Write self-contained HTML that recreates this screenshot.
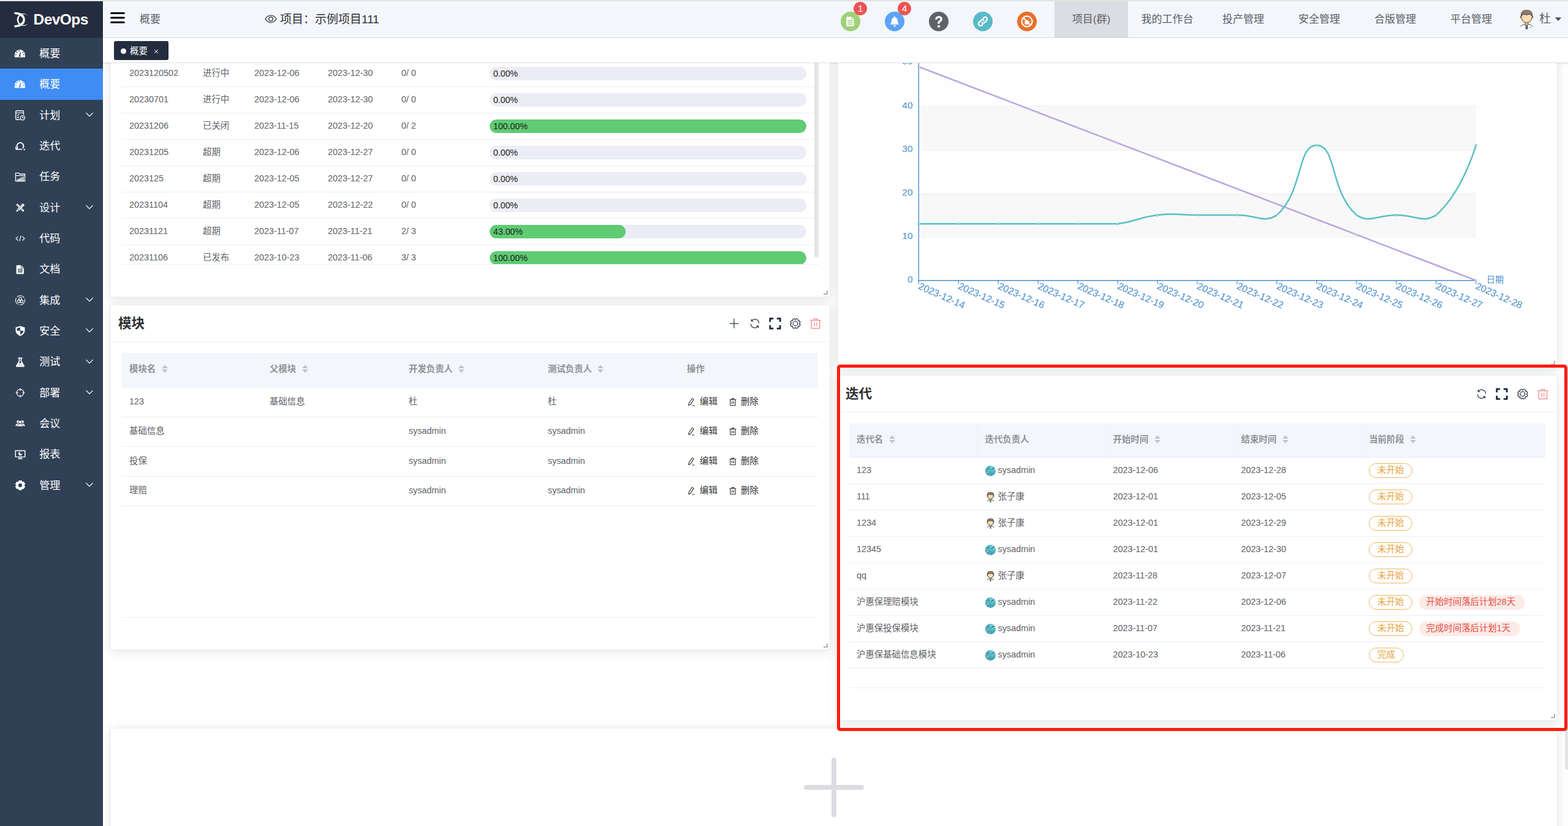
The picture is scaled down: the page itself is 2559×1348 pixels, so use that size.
<!DOCTYPE html>
<html lang="zh"><head>
<meta charset="utf-8">
<title>DevOps</title>
<style>
*{box-sizing:border-box;margin:0;padding:0}
html,body{width:2559px;height:1348px;overflow:hidden;background:#fff}
body{position:relative;font-family:"Liberation Sans","Noto Sans CJK SC",sans-serif;font-size:14px;color:#606266}
.abs{position:absolute}
svg{display:block;overflow:visible}
/* top strip */
#strip{left:0;top:0;width:2559px;height:2px;background:#e2e3df}
/* sidebar */
#side{left:0;top:2px;width:168px;height:1346px;background:#304156}
#logo{left:0;top:0;width:168px;height:60px;background:#242d3f}
#logo .txt{left:54.5px;top:14.4px;font-size:24.5px;font-weight:bold;color:#fff;line-height:32px;letter-spacing:-0.55px}
.mi{left:0;width:168px;height:50px;color:#fff;font-size:17px}
.mi .lbl{left:64.3px;top:.8px;line-height:50px;white-space:nowrap}
.mi .ic{left:22px;top:14px;width:22px;height:22px}
.mi .arr{left:140.3px;top:20.2px;width:12px;height:8px}
.mi.act{background:#3f8cf5}
/* header */
#hdr{left:168px;top:2px;width:2391px;height:60px;background:#f3f6fb;border-bottom:1px solid #d9dce3;border-left:1px solid #fff}
#tabs{left:168px;top:62px;width:2391px;height:41px;background:#fff;border-bottom:1px solid #d8dce5;box-shadow:0 1px 3px rgba(0,0,0,.10)}
.nav{top:0;height:59px;line-height:59px;font-size:17px;color:#5a5e66;text-align:center;white-space:nowrap}
/* cards */
.card{background:#fff;border:1px solid #ebeef5;border-radius:3px;box-shadow:0 2px 18px 0 rgba(0,0,0,.11)}
.ctitle{font-size:21.6px;font-weight:bold;color:#303133;white-space:nowrap;line-height:30px}
.hline{height:1px;background:#ebeef5}
.th{background:#f3f6fb}
.tht{font-weight:bold;color:#909399;font-size:14.4px;line-height:20px;white-space:nowrap}
.td{font-size:14.4px;line-height:20px;color:#606266;white-space:nowrap}
.rb{height:1px;background:#ebeef5}
.bar{height:22px;border-radius:11px;background:#ecedf4;overflow:hidden}
.bar i{display:block;height:22px;border-radius:11px;background:#5fcb73}
.bart{font-size:14.2px;line-height:22px;color:#1b1b1b;white-space:nowrap}
.tag{height:24px;line-height:20px;border:1px solid #f1b55c;border-radius:12px;color:#e6a23c;font-size:14.4px;padding:0 12.8px;white-space:nowrap;background:#fff}
.rtag{height:24px;line-height:22px;border-radius:12px;color:#e34d3f;font-size:14.4px;padding:0 15.6px 0 12px;white-space:nowrap;background:#fdebe8}
.k{display:inline-block;height:0}
</style>
</head>
<body>
<div id="strip" class="abs"></div><div class="abs" style="left:0;top:1px;width:168px;height:1px;background:#eef0ed"></div>

<!-- SIDEBAR -->
<div id="side" class="abs">
  <div id="logo" class="abs">
    <svg class="abs" style="left:23.21px;top:17.30px" width="23.52" height="26.26" viewBox="150 170 430 480"><path d="M160 182C230 182 290 195 340 215C430 250 475 330 475 410C475 490 430 570 340 605C290 625 230 638 160 638L160 578C220 575 262 568 300 545C375 510 415 460 415 410C415 360 375 310 300 275C262 252 220 245 160 242Z" fill="#fff"></path><path d="M570 300A185 185 0 1 0 570 520A166 166 0 1 1 570 300Z" fill="#fff"></path></svg>
    <div class="txt abs">DevOps</div>
  </div>
  <!--MENU_S-->
  <div class="mi abs" style="top:60.00px;height:50.36px"><div class="ic abs"><svg viewBox="0 0 22 22" width="22" height="22"><path d="M1.800 13.600A8.600 8.600 0 0 1 19 13.600V16.400A1.200 1.200 0 0 1 17.800 17.600H3A1.200 1.200 0 0 1 1.800 16.400Z" fill="#fff"></path><g fill="#304156"><circle cx="3.900" cy="13.300" r="1"></circle><circle cx="5.300" cy="9.300" r="1"></circle><circle cx="9.300" cy="7" r="1"></circle><circle cx="15.300" cy="9.300" r="1"></circle><circle cx="16.900" cy="13.300" r="1"></circle><path d="M9 15.400l1.900-6.400 1.100.3-.9 6.600z"></path><circle cx="10.100" cy="15.500" r="1.250"></circle></g></svg></div><div class="lbl abs">概要</div></div>
  <div class="mi abs act" style="top:110.36px;height:50.36px"><div class="ic abs"><svg viewBox="0 0 22 22" width="22" height="22"><path d="M1.800 13.600A8.600 8.600 0 0 1 19 13.600V16.400A1.200 1.200 0 0 1 17.800 17.600H3A1.200 1.200 0 0 1 1.800 16.400Z" fill="#fff"></path><g fill="#3f8cf5"><circle cx="3.900" cy="13.300" r="1"></circle><circle cx="5.300" cy="9.300" r="1"></circle><circle cx="9.300" cy="7" r="1"></circle><circle cx="15.300" cy="9.300" r="1"></circle><circle cx="16.900" cy="13.300" r="1"></circle><path d="M9 15.400l1.900-6.400 1.100.3-.9 6.600z"></path><circle cx="10.100" cy="15.500" r="1.250"></circle></g></svg></div><div class="lbl abs">概要</div></div>
  <div class="mi abs" style="top:160.72px;height:50.36px"><div class="ic abs"><svg viewBox="0 0 22 22" width="20" height="20" style="margin:1.1px 0 0 .7px" fill="none" stroke="#fff" stroke-width="1.5"><path d="M11 19H4.5A1.5 1.5 0 0 1 3 17.500v-13A1.500 1.500 0 0 1 4.500 3h11A1.500 1.500 0 0 1 17 4.500V10"></path><path d="M3 6.800h14" stroke-width="1.3"></path><path d="M5.500 10.300l1.200 1.200 2.200-2.300M5.500 14.600l1.200 1.200 2.200-2.300" stroke-width="1.3"></path><circle cx="15.300" cy="15.600" r="3.900"></circle><path d="M15.300 13.600v2.200h1.800" stroke-width="1.3"></path></svg></div><div class="lbl abs">计划</div><svg class="arr abs" viewBox="0 0 12 8" width="12" height="8"><path d="M.400 1.100L6 6.700l5.600-5.600" fill="none" stroke="#fff" stroke-width="1.300"></path></svg></div>
  <div class="mi abs" style="top:211.08px;height:50.36px"><div class="ic abs"><svg viewBox="0 0 22 22" width="20" height="20" style="margin:1.1px 0 0 .7px" fill="none" stroke="#fff" stroke-width="2"><path d="M6.300 15.200A6 6 0 1 1 16.800 12.800c-.3 1-.8 1.900-1.500 2.600"></path><path d="M2.800 17.300h11.400" stroke-width="1.800"></path><path d="M2.500 12.400l1 3.700 3.600-1.100" stroke-width="1.500"></path><circle cx="18.400" cy="17.600" r="1.300" fill="#fff" stroke="none"></circle></svg></div><div class="lbl abs">迭代</div></div>
  <div class="mi abs" style="top:261.44px;height:50.36px"><div class="ic abs"><svg viewBox="0 0 22 22" width="20" height="20" style="margin:1.1px 0 0 .7px" fill="none" stroke="#fff" stroke-width="1.400"><path d="M2.700 18.300V3.700h5.600l1.400 1.800h9.600v12.800z"></path><path d="M2.700 8.300h16.600"></path><g fill="#fff" stroke="none"><rect x="5" y="15" width="1.800" height="2.600"></rect><rect x="7.600" y="13.800" width="1.800" height="3.800"></rect><rect x="10.200" y="12.700" width="1.800" height="4.900"></rect><rect x="12.800" y="11.500" width="1.800" height="6.100"></rect><rect x="15.400" y="10.400" width="1.800" height="7.200"></rect></g></svg></div><div class="lbl abs">任务</div></div>
  <div class="mi abs" style="top:311.80px;height:50.36px"><div class="ic abs"><svg viewBox="0 0 22 22" width="20" height="20" style="margin:1.1px 0 0 .7px" fill="#fff"><path d="M3.600 5.800l2.300-2.300 12.600 12.600-2.300 2.300z"></path><path d="M15.600 3.200l3.200 3.200-9.700 9.700-3.200-3.200z"></path><path d="M5.200 13.700l3.100 3.100-4.600 1.500z"></path><g stroke="#304156" stroke-width="1" fill="none"><path d="M6.300 7.600l1.300-1.300M8.300 9.600l1.300-1.300M12.300 13.600l1.300-1.300M14.300 15.600l1.300-1.300"></path><path d="M7 14.200l7.900-7.900"></path></g></svg></div><div class="lbl abs">设计</div><svg class="arr abs" viewBox="0 0 12 8" width="12" height="8"><path d="M.400 1.100L6 6.700l5.600-5.600" fill="none" stroke="#fff" stroke-width="1.300"></path></svg></div>
  <div class="mi abs" style="top:362.16px;height:50.36px"><div class="ic abs"><svg viewBox="0 0 22 22" width="20" height="20" style="margin:1.1px 0 0 .7px" fill="none" stroke="#fff" stroke-width="1.300" stroke-linecap="round" stroke-linejoin="round"><path d="M6.800 7.800L3.300 11.200l3.500 3.400M15.200 7.800l3.500 3.400-3.500 3.400M12.400 6.900L9.600 15.500"></path></svg></div><div class="lbl abs">代码</div></div>
  <div class="mi abs" style="top:412.52px;height:50.36px"><div class="ic abs"><svg viewBox="0 0 22 22" width="20" height="20" style="margin:1.1px 0 0 .7px"><path d="M5.500 3h7.200l4.800 4.800v9.700a1.500 1.500 0 0 1-1.500 1.500H5.500A1.500 1.500 0 0 1 4 17.500v-13A1.500 1.500 0 0 1 5.500 3z" fill="#fff"></path><path d="M12.700 3v4.800h4.800" fill="none" stroke="#304156" stroke-width="1"></path><path d="M6.700 10.300h8.600M6.700 12.800h8.600M6.700 15.300h8.600" stroke="#304156" stroke-width="1.200"></path></svg></div><div class="lbl abs">文档</div></div>
  <div class="mi abs" style="top:462.88px;height:50.36px"><div class="ic abs"><svg viewBox="0 0 22 22" width="20" height="20" style="margin:1.1px 0 0 .7px" fill="none" stroke="#fff" stroke-width="1.200"><circle cx="11" cy="11" r="8.300" stroke-dasharray="14 2.500"></circle><circle cx="11" cy="8.300" r="2.500"></circle><circle cx="8.500" cy="12.800" r="2.500"></circle><circle cx="13.500" cy="12.800" r="2.500"></circle><circle cx="11" cy="11.300" r="1" fill="#fff" stroke="none"></circle></svg></div><div class="lbl abs">集成</div><svg class="arr abs" viewBox="0 0 12 8" width="12" height="8"><path d="M.400 1.100L6 6.700l5.600-5.600" fill="none" stroke="#fff" stroke-width="1.300"></path></svg></div>
  <div class="mi abs" style="top:513.24px;height:50.36px"><div class="ic abs"><svg viewBox="0 0 22 22" width="20" height="20" style="margin:1.1px 0 0 .7px"><path d="M11 2.300l8.200 2.300v5.600c0 4.800-3.400 8.200-8.200 9.900-4.800-1.700-8.200-5.100-8.200-9.900V4.600z" fill="#fff"></path><path d="M11 4.600v6.200H5.100V6.300z" fill="#304156"></path><path d="M11 10.800h5.900c-.3 3.100-2.600 5.500-5.900 6.900z" fill="#304156"></path></svg></div><div class="lbl abs">安全</div><svg class="arr abs" viewBox="0 0 12 8" width="12" height="8"><path d="M.400 1.100L6 6.700l5.600-5.600" fill="none" stroke="#fff" stroke-width="1.300"></path></svg></div>
  <div class="mi abs" style="top:563.60px;height:50.36px"><div class="ic abs"><svg viewBox="0 0 22 22" width="20" height="20" style="margin:1.1px 0 0 .7px"><path d="M7.300 2.800h7.400v1.800h-1.100v4.600l5 8.300a1.300 1.300 0 0 1-1.100 2H4.500a1.300 1.300 0 0 1-1.100-2l5-8.300V4.600H7.300z" fill="#fff"></path><path d="M10.200 4.600h1.600v5.100l1.700 2.900H8.500l1.700-2.900z" fill="#304156"></path><circle cx="9.300" cy="15.500" r=".9" fill="#304156"></circle><circle cx="12.600" cy="16.600" r=".7" fill="#304156"></circle></svg></div><div class="lbl abs">测试</div><svg class="arr abs" viewBox="0 0 12 8" width="12" height="8"><path d="M.400 1.100L6 6.700l5.600-5.600" fill="none" stroke="#fff" stroke-width="1.300"></path></svg></div>
  <div class="mi abs" style="top:613.96px;height:50.36px"><div class="ic abs"><svg viewBox="0 0 22 22" width="20" height="20" style="margin:1.1px 0 0 .7px" fill="none" stroke="#fff" stroke-width="1.300"><circle cx="11" cy="11" r="6.300"></circle><path d="M11 2.800v5M11 14.200v5M2.800 11h5M14.200 11h5"></path></svg></div><div class="lbl abs">部署</div><svg class="arr abs" viewBox="0 0 12 8" width="12" height="8"><path d="M.400 1.100L6 6.700l5.600-5.600" fill="none" stroke="#fff" stroke-width="1.300"></path></svg></div>
  <div class="mi abs" style="top:664.32px;height:50.36px"><div class="ic abs"><svg viewBox="0 0 22 22" width="20" height="20" style="margin:1.1px 0 0 .7px" fill="#fff"><circle cx="7.200" cy="8" r="2.500"></circle><circle cx="14.800" cy="8" r="2.500"></circle><path d="M2.500 15.600c.3-2.700 2-4.300 4.700-4.300 1 0 1.800.2 2.500.7-.9.900-1.400 2.100-1.500 3.600z"></path><path d="M19.500 15.600c-.3-2.700-2-4.300-4.700-4.300-1 0-1.800.2-2.500.7.900.9 1.400 2.100 1.500 3.600z"></path><circle cx="11" cy="8.600" r="2.900" stroke="#304156" stroke-width="1"></circle><path d="M5.600 16.600c.3-3.100 2.300-4.900 5.400-4.900s5.100 1.800 5.400 4.900z" stroke="#304156" stroke-width="1"></path></svg></div><div class="lbl abs">会议</div></div>
  <div class="mi abs" style="top:714.68px;height:50.36px"><div class="ic abs"><svg viewBox="0 0 22 22" width="20" height="20" style="margin:1.1px 0 0 .7px"><path d="M2.500 3.800h17v11.200h-17z" fill="none" stroke="#fff" stroke-width="1.600"></path><path d="M7 18.300h8M9.300 15v3.300M12.700 15v3.300" stroke="#fff" stroke-width="1.500"></path><circle cx="11" cy="9.400" r="3.300" fill="#fff"></circle><path d="M11 9.400V6.100a3.300 3.300 0 0 1 3.300 3.300z" fill="#304156" stroke="#304156" stroke-width=".6"></path></svg></div><div class="lbl abs">报表</div></div>
  <div class="mi abs" style="top:765.04px;height:50.36px"><div class="ic abs"><svg viewBox="0 0 22 22" width="20" height="20" style="margin:1.1px 0 0 .7px"><path d="M9.10 3.230 L12.900 3.230 L13.450 5.520 L14.520 6.140 L16.780 5.470 L18.680 8.760 L16.970 10.380 L16.970 11.620 L18.680 13.240 L16.780 16.530 L14.520 15.860 L13.450 16.480 L12.900 18.770 L9.100 18.770 L8.550 16.480 L7.480 15.860 L5.220 16.530 L3.320 13.240 L5.030 11.620 L5.030 10.380 L3.320 8.760 L5.220 5.470 L7.480 6.140 L8.550 5.520z" fill="#fff" stroke="#fff" stroke-width="2.200" stroke-linejoin="round"></path><circle cx="11" cy="11" r="3.400" fill="#304156"></circle></svg></div><div class="lbl abs">管理</div><svg class="arr abs" viewBox="0 0 12 8" width="12" height="8"><path d="M.400 1.100L6 6.700l5.600-5.600" fill="none" stroke="#fff" stroke-width="1.300"></path></svg></div>
  <!--MENU_E-->
</div>

<!-- HEADER -->
<div id="hdr" class="abs">
  <!--HDR_S-->
  <svg class="abs" style="left:10px;top:16px" width="26" height="22" viewBox="0 0 26 22"><path d="M2.500 3.500h20.800M2.500 11h20.800M2.500 18.500h20.800" stroke="#000" stroke-width="3" stroke-linecap="round" fill="none"></path></svg>
  <div class="abs" style="left:59px;top:18px;font-size:17px;line-height:24px;color:#5f6368;white-space:nowrap">概要</div>
  <svg class="abs" style="left:263px;top:22px" width="20" height="14" viewBox="0 0 20 14"><path d="M1 7C3.200 3.200 6.300 1.200 10 1.200S16.800 3.200 19 7c-2.200 3.800-5.300 5.800-9 5.800S3.200 10.800 1 7z" fill="none" stroke="#303133" stroke-width="1.300"></path><circle cx="10" cy="7" r="3.300" fill="none" stroke="#303133" stroke-width="1.300"></circle></svg>
  <div class="abs" style="left:288px;top:17px;font-size:19px;line-height:26px;color:#303133;white-space:nowrap">项目：示例项目111</div>
  <svg class="abs" style="left:1202.6px;top:16.8px" width="32" height="32" viewBox="0 0 32 32"><circle cx="16" cy="16" r="16" fill="#a0d07a"></circle><path d="M10.200 8.500h8l3.300 3.300v11a.9.9 0 0 1-.9.900H10.200a.9.9 0 0 1-.9-.9V9.400a.9.9 0 0 1 .9-.9z" fill="#fff"></path><path d="M18.200 8.500v3.300h3.300" fill="none" stroke="#a0d07a" stroke-width=".9"></path><path d="M11.300 14.200h8.400M11.300 17.200h8.400M11.300 20.200h8.400" stroke="#a0d07a" stroke-width="1.500"></path></svg>
  <svg class="abs" style="left:1274.5px;top:16.8px" width="32" height="32" viewBox="0 0 32 32"><circle cx="16" cy="16" r="16" fill="#5aa3f8"></circle><path d="M16 7.600c.7 0 1.100.5 1.100 1.100v.5c2.500.6 3.900 2.700 3.900 5.400 0 2.800.7 4.400 2.100 5.500v.9H8.900v-.9c1.400-1.100 2.100-2.700 2.100-5.500 0-2.700 1.400-4.800 3.900-5.400v-.5c0-.6.4-1.100 1.100-1.100z" fill="#fff"></path><path d="M13.800 22.300h4.400a2.200 2.200 0 0 1-4.400 0z" fill="#fff"></path></svg>
  <svg class="abs" style="left:1346.5px;top:16.8px" width="32" height="32" viewBox="0 0 32 32"><circle cx="16" cy="16" r="16" fill="#606267"></circle><g transform="translate(16 16.300) scale(1.220) translate(-16 -16)"><path d="M11.300 13.200c0-2.900 2-4.700 4.800-4.700s4.700 1.700 4.700 4.100c0 1.700-.9 2.700-2.100 3.500-1 .7-1.400 1.200-1.400 2.200v.6h-2.700v-.9c0-1.600.7-2.500 1.900-3.300 1-.7 1.500-1.200 1.500-2 0-1-.7-1.700-1.900-1.700s-2.100.8-2.100 2.200z" fill="#fff"></path><circle cx="16" cy="22.400" r="1.800" fill="#fff"></circle></g></svg>
  <svg class="abs" style="left:1418.5px;top:16.8px" width="32" height="32" viewBox="0 0 32 32"><circle cx="16" cy="16" r="16" fill="#5bbac8"></circle><g fill="none" stroke="#fff" stroke-width="2.300" stroke-linecap="round"><path d="M14.300 17.700a3.300 3.300 0 0 0 4.700 0l3.100-3.100a3.300 3.300 0 0 0-4.700-4.700l-1 1"></path><path d="M17.700 14.300a3.300 3.300 0 0 0-4.700 0l-3.100 3.100a3.300 3.300 0 0 0 4.700 4.700l1-1"></path></g></svg>
  <svg class="abs" style="left:1490.7px;top:16.8px" width="32" height="32" viewBox="0 0 32 32"><circle cx="16" cy="16" r="16" fill="#e8702a"></circle><circle cx="16" cy="16" r="8.600" fill="none" stroke="#fff" stroke-width="2.200"></circle><path d="M9.900 9.900l12.200 12.200" stroke="#fff" stroke-width="2.200"></path><path d="M12.500 18.500c0-2.800 1.500-4.600 3.500-4.600s3.500 1.800 3.500 4.600c0 1.200-.4 2-1 2.600h-5c-.6-.6-1-1.400-1-2.600z" fill="#fff"></path><path d="M14.300 13.500l-1-1.400M17.700 13.500l1-1.400M12.300 16.500l-1.900-.6M19.700 16.500l1.900-.6M12.500 19.500l-1.800.8M19.500 19.500l1.800.8" stroke="#fff" stroke-width="1"></path></svg>
  <div class="abs" style="left:1224.2px;top:0.5px;width:22px;height:22px;border-radius:11px;background:#ea5455;color:#fff;font-size:15px;line-height:22px;text-align:center">1</div>
  <div class="abs" style="left:1296.1px;top:0.5px;width:22px;height:22px;border-radius:11px;background:#ea5455;color:#fff;font-size:15px;line-height:22px;text-align:center">4</div>
  <div class="abs" style="left:1552px;top:0;width:120px;height:59px;background:#dcdde3"></div>
  <div class="nav abs" style="left:1550px;width:124px">项目(群)</div>
  <div class="nav abs" style="left:1674px;width:124px">我的工作台</div>
  <div class="nav abs" style="left:1798px;width:124px">投产管理</div>
  <div class="nav abs" style="left:1922px;width:124px">安全管理</div>
  <div class="nav abs" style="left:2046px;width:124px">合版管理</div>
  <div class="nav abs" style="left:2170px;width:124px">平台管理</div>
  <div class="abs" style="left:2343px;top:16px;font-size:19px;line-height:26px;color:#5a5e66">杜</div>
  <svg class="abs" style="left:2368px;top:26px" width="12" height="7" viewBox="0 0 12 7"><path d="M.8.500h10.400L6 6.300z" fill="#4a4e57"></path></svg>
  <svg class="abs" style="left:2306.5px;top:13.3px" width="32" height="34" viewBox="0 0 32 34"><defs><clipPath id="uav"><circle cx="15.600" cy="17" r="15.700"></circle></clipPath></defs><g clip-path="url(#uav)">
<circle cx="15.600" cy="17" r="15.700" fill="#f6f6f4"></circle>
<path d="M3.300 34C3.800 27.600 8 25.700 12.200 24.800L15.600 27 19 24.800C23.200 25.700 27.400 27.600 27.900 34Z" fill="#fff" stroke="#3a3a3a" stroke-width=".9"></path>
<path d="M13.900 25.200h3.400l.6 8.200h-4.600z" fill="#4d6784"></path>
<path d="M20.500 29.600h2.300" stroke="#3a3a3a" stroke-width="1"></path>
<path d="M13.300 20.500h4.600v4.600l-2.300 1.500-2.300-1.500z" fill="#f3d09c" stroke="#3a3a3a" stroke-width=".7"></path>
<circle cx="6.400" cy="12.800" r="1.400" fill="#fbdcaa" stroke="#3a3a3a" stroke-width=".8"></circle><circle cx="24.800" cy="12.800" r="1.400" fill="#fbdcaa" stroke="#3a3a3a" stroke-width=".8"></circle>
<ellipse cx="15.600" cy="11.600" rx="9" ry="10.800" fill="#fbdcaa" stroke="#3a3a3a" stroke-width="1"></ellipse>
<path d="M6.600 11.600C6 4.600 10 .8 15.600 .8C21.200 .8 25.200 4.600 24.600 11.600C23.500 9.400 21 8.200 18 8.500C17 9.600 14.400 9.600 13.200 8.500C10.400 8.200 7.800 9.400 6.600 11.600Z" fill="#8c7b6e" stroke="#3a3a3a" stroke-width=".9"></path>
</g></svg>
  <!--HDR_E-->
</div>
<div id="tabs" class="abs">
  <!--TABS_S-->
  <div class="abs" style="left:18px;top:5px;width:89px;height:31px;background:#242d3f;border-radius:3px"></div>
  <div class="abs" style="left:28.8px;top:16.6px;width:9px;height:9px;border-radius:5px;background:#fff"></div>
  <div class="abs" style="left:44px;top:11px;font-size:14.4px;line-height:20px;color:#fff;white-space:nowrap">概要</div>
  <svg class="abs" style="left:83.2px;top:17.8px" width="8" height="8" viewBox="0 0 8 8"><path d="M1 1l6 6M7 1L1 7" stroke="#fff" stroke-width="1" fill="none"></path></svg>
  <!--TABS_E-->
</div>

<!-- CONTENT -->
<div id="content" class="abs" style="left:168px;top:103px;width:2391px;height:1245px;overflow:hidden">
  <!--CARD1_S-->
  <div class="card abs" style="left:12px;top:-63px;width:1175px;height:445px"></div>
  <div class="abs" style="left:31px;top:0px;width:1138px;height:329px;overflow:hidden">
  <div class="td abs" style="left:12px;top:6.4px">2023120502</div>
  <div class="td abs" style="left:132px;top:6.4px">进行中</div>
  <div class="td abs" style="left:216px;top:6.4px">2023-12-06</div>
  <div class="td abs" style="left:336px;top:6.4px">2023-12-30</div>
  <div class="td abs" style="left:456px;top:6.4px">0/ 0</div>
  <div class="bar abs" style="left:600px;top:6.2px;width:517px"></div>
  <div class="bart abs" style="left:606px;top:5.6px">0.00%</div>
  <div class="rb abs" style="left:0;top:38.0px;width:1130px"></div>
  <div class="td abs" style="left:12px;top:49.4px">20230701</div>
  <div class="td abs" style="left:132px;top:49.4px">进行中</div>
  <div class="td abs" style="left:216px;top:49.4px">2023-12-06</div>
  <div class="td abs" style="left:336px;top:49.4px">2023-12-30</div>
  <div class="td abs" style="left:456px;top:49.4px">0/ 0</div>
  <div class="bar abs" style="left:600px;top:49.2px;width:517px"></div>
  <div class="bart abs" style="left:606px;top:48.6px">0.00%</div>
  <div class="rb abs" style="left:0;top:81.0px;width:1130px"></div>
  <div class="td abs" style="left:12px;top:92.4px">20231206</div>
  <div class="td abs" style="left:132px;top:92.4px">已关闭</div>
  <div class="td abs" style="left:216px;top:92.4px">2023-11-15</div>
  <div class="td abs" style="left:336px;top:92.4px">2023-12-20</div>
  <div class="td abs" style="left:456px;top:92.4px">0/ 2</div>
  <div class="bar abs" style="left:600px;top:92.2px;width:517px"><i style="width:100.0%"></i></div>
  <div class="bart abs" style="left:606px;top:91.6px">100.00%</div>
  <div class="rb abs" style="left:0;top:124.0px;width:1130px"></div>
  <div class="td abs" style="left:12px;top:135.4px">20231205</div>
  <div class="td abs" style="left:132px;top:135.4px">超期</div>
  <div class="td abs" style="left:216px;top:135.4px">2023-12-06</div>
  <div class="td abs" style="left:336px;top:135.4px">2023-12-27</div>
  <div class="td abs" style="left:456px;top:135.4px">0/ 0</div>
  <div class="bar abs" style="left:600px;top:135.2px;width:517px"></div>
  <div class="bart abs" style="left:606px;top:134.6px">0.00%</div>
  <div class="rb abs" style="left:0;top:167.0px;width:1130px"></div>
  <div class="td abs" style="left:12px;top:178.4px">2023125</div>
  <div class="td abs" style="left:132px;top:178.4px">超期</div>
  <div class="td abs" style="left:216px;top:178.4px">2023-12-05</div>
  <div class="td abs" style="left:336px;top:178.4px">2023-12-27</div>
  <div class="td abs" style="left:456px;top:178.4px">0/ 0</div>
  <div class="bar abs" style="left:600px;top:178.2px;width:517px"></div>
  <div class="bart abs" style="left:606px;top:177.6px">0.00%</div>
  <div class="rb abs" style="left:0;top:210.0px;width:1130px"></div>
  <div class="td abs" style="left:12px;top:221.4px">20231104</div>
  <div class="td abs" style="left:132px;top:221.4px">超期</div>
  <div class="td abs" style="left:216px;top:221.4px">2023-12-05</div>
  <div class="td abs" style="left:336px;top:221.4px">2023-12-22</div>
  <div class="td abs" style="left:456px;top:221.4px">0/ 0</div>
  <div class="bar abs" style="left:600px;top:221.2px;width:517px"></div>
  <div class="bart abs" style="left:606px;top:220.6px">0.00%</div>
  <div class="rb abs" style="left:0;top:253.0px;width:1130px"></div>
  <div class="td abs" style="left:12px;top:264.4px">20231121</div>
  <div class="td abs" style="left:132px;top:264.4px">超期</div>
  <div class="td abs" style="left:216px;top:264.4px">2023-11-07</div>
  <div class="td abs" style="left:336px;top:264.4px">2023-11-21</div>
  <div class="td abs" style="left:456px;top:264.4px">2/ 3</div>
  <div class="bar abs" style="left:600px;top:264.2px;width:517px"><i style="width:43.0%"></i></div>
  <div class="bart abs" style="left:606px;top:263.6px">43.00%</div>
  <div class="rb abs" style="left:0;top:296.0px;width:1130px"></div>
  <div class="td abs" style="left:12px;top:307.4px">20231106</div>
  <div class="td abs" style="left:132px;top:307.4px">已发布</div>
  <div class="td abs" style="left:216px;top:307.4px">2023-10-23</div>
  <div class="td abs" style="left:336px;top:307.4px">2023-11-06</div>
  <div class="td abs" style="left:456px;top:307.4px">3/ 3</div>
  <div class="bar abs" style="left:600px;top:307.2px;width:517px"><i style="width:100.0%"></i></div>
  <div class="bart abs" style="left:606px;top:306.6px">100.00%</div>
  <div class="rb abs" style="left:0;top:328.0px;width:1138px"></div>
  <div class="abs" style="left:1129.7px;top:-6px;width:7.500px;height:323px;background:#e4e4e4;border-radius:4px"></div>
  </div>
  <svg class="abs" style="left:1176.1px;top:371.1px" width="7" height="7" viewBox="0 0 7 7"><path d="M5.900 0v5.900H0" fill="none" stroke="#a6a6a6" stroke-width="1.800"></path></svg>
  <!--CARD1_E-->
  <!--CARD2_S-->
  <div class="card abs" style="left:12px;top:393.6px;width:1175px;height:564.6px"></div>
  <div class="ctitle abs" style="left:25px;top:410px">模块</div>
  <div class="hline abs" style="left:14px;top:454px;width:1171px"></div>
  <svg class="abs" style="left:1020.4px;top:414.8px" width="20" height="20" viewBox="0 0 20 20"><path d="M2.500 10h15M10 2.300v15.400" stroke="#2b3548" stroke-width="1.250" fill="none"></path></svg>
  <svg class="abs" style="left:1053.5px;top:414.8px" width="20" height="20" viewBox="0 0 20 20"><g fill="none" stroke="#2b3548" stroke-width="1.250"><path d="M16.700 9.600A6.800 6.800 0 0 0 4.600 5.600"></path><path d="M3.300 10.400A6.800 6.800 0 0 0 15.400 14.400"></path><path d="M4.300 2.900l.1 3.200 3.200-.3"></path><path d="M15.700 17.100l-.1-3.200-3.200.3"></path></g></svg>
  <svg class="abs" style="left:1086.5px;top:414.8px" width="20" height="20" viewBox="0 0 20 20"><path d="M1.800 7.200V1.800h5.400M12.800 1.800h5.400v5.400M18.200 12.800v5.400h-5.400M7.200 18.200H1.800v-5.400" fill="none" stroke="#1b2438" stroke-width="2.800"></path></svg>
  <svg class="abs" style="left:1119.9px;top:414.8px" width="20" height="20" viewBox="0 0 20 20"><path d="M11.57 1.95 L14.58 3.20 L14.25 5.08 L14.92 5.75 L16.80 5.42 L18.05 8.43 L16.48 9.53 L16.48 10.47 L18.05 11.57 L16.80 14.58 L14.92 14.25 L14.25 14.92 L14.58 16.80 L11.57 18.05 L10.47 16.48 L9.53 16.48 L8.43 18.05 L5.42 16.80 L5.75 14.92 L5.08 14.25 L3.20 14.58 L1.95 11.57 L3.52 10.47 L3.52 9.53 L1.95 8.43 L3.20 5.42 L5.08 5.75 L5.75 5.08 L5.42 3.20 L8.43 1.95 L9.53 3.52 L10.47 3.52z" fill="none" stroke="#2b3548" stroke-width="1.200" stroke-linejoin="round"></path><circle cx="10" cy="10" r="3.800" fill="none" stroke="#2b3548" stroke-width="1.200"></circle></svg>
  <svg class="abs" style="left:1152.8px;top:414.8px" width="20" height="20" viewBox="0 0 20 20"><g fill="none" stroke="#f17f7f" stroke-width="1.150"><path d="M1.300 4.700h17.400"></path><path d="M7.300 4.600V2.200h5.400v2.400"></path><path d="M3.300 4.700v13.100h13.400V4.700"></path><path d="M8.200 8.300v6.200M11.800 8.300v6.200"></path></g></svg>
  <div class="th abs" style="left:31px;top:473px;width:1136px;height:56px;border-bottom:1px solid #ebeef5"></div>
  <div class="tht abs" style="left:43px;top:489px">模块名</div>
  <svg class="abs" style="left:96.0px;top:492.0px" width="10" height="14" viewBox="0 0 10 14"><path d="M5 .5l5 5.500H0z" fill="#c0c4cc"></path><path d="M5 13.500l5-5.500H0z" fill="#c0c4cc"></path></svg>
  <div class="tht abs" style="left:272px;top:489px">父模块</div>
  <svg class="abs" style="left:325.0px;top:492.0px" width="10" height="14" viewBox="0 0 10 14"><path d="M5 .5l5 5.500H0z" fill="#c0c4cc"></path><path d="M5 13.500l5-5.500H0z" fill="#c0c4cc"></path></svg>
  <div class="tht abs" style="left:499px;top:489px">开发负责人</div>
  <svg class="abs" style="left:580.0px;top:492.0px" width="10" height="14" viewBox="0 0 10 14"><path d="M5 .5l5 5.500H0z" fill="#c0c4cc"></path><path d="M5 13.500l5-5.500H0z" fill="#c0c4cc"></path></svg>
  <div class="tht abs" style="left:726px;top:489px">测试负责人</div>
  <svg class="abs" style="left:807.0px;top:492.0px" width="10" height="14" viewBox="0 0 10 14"><path d="M5 .5l5 5.500H0z" fill="#c0c4cc"></path><path d="M5 13.500l5-5.500H0z" fill="#c0c4cc"></path></svg>
  <div class="tht abs" style="left:953px;top:489px">操作</div>
  <div class="td abs" style="left:43px;top:541.7px">123</div>
  <div class="td abs" style="left:272px;top:541.7px">基础信息</div>
  <div class="td abs" style="left:499px;top:541.7px">杜</div>
  <div class="td abs" style="left:726px;top:541.7px">杜</div>
  <svg class="abs" style="left:953.0px;top:545.5px" width="14" height="14" viewBox="0 0 14 14"><path d="M8.600 1.200l2.600 1.700-5.200 8.200-3.100 1.300.4-3.300zM8.500 13h4.200" fill="none" stroke="#303133" stroke-width="1.100" stroke-linejoin="round"></path></svg>
  <div class="td abs" style="left:974px;top:541.7px;color:#303133">编辑</div>
  <svg class="abs" style="left:1020.5px;top:545.5px" width="14" height="14" viewBox="0 0 14 14"><path d="M1.500 3.300h11M5.200 3.200V1.600h3.600v1.600M2.900 3.300v9.200h8.200V3.300M5.700 5.800v4.200M8.300 5.800v4.200" fill="none" stroke="#303133" stroke-width="1.100"></path></svg>
  <div class="td abs" style="left:1041px;top:541.7px;color:#303133">删除</div>
  <div class="rb abs" style="left:31px;top:576.7px;width:1136px"></div>
  <div class="td abs" style="left:43px;top:590.2px">基础信息</div>
  <div class="td abs" style="left:499px;top:590.2px">sysadmin</div>
  <div class="td abs" style="left:726px;top:590.2px">sysadmin</div>
  <svg class="abs" style="left:953.0px;top:594.0px" width="14" height="14" viewBox="0 0 14 14"><path d="M8.600 1.200l2.600 1.700-5.200 8.200-3.100 1.300.4-3.300zM8.500 13h4.200" fill="none" stroke="#303133" stroke-width="1.100" stroke-linejoin="round"></path></svg>
  <div class="td abs" style="left:974px;top:590.2px;color:#303133">编辑</div>
  <svg class="abs" style="left:1020.5px;top:594.0px" width="14" height="14" viewBox="0 0 14 14"><path d="M1.500 3.300h11M5.200 3.200V1.600h3.600v1.600M2.900 3.300v9.200h8.200V3.300M5.700 5.800v4.200M8.300 5.800v4.200" fill="none" stroke="#303133" stroke-width="1.100"></path></svg>
  <div class="td abs" style="left:1041px;top:590.2px;color:#303133">删除</div>
  <div class="rb abs" style="left:31px;top:625.0px;width:1136px"></div>
  <div class="td abs" style="left:43px;top:638.7px">投保</div>
  <div class="td abs" style="left:499px;top:638.7px">sysadmin</div>
  <div class="td abs" style="left:726px;top:638.7px">sysadmin</div>
  <svg class="abs" style="left:953.0px;top:642.5px" width="14" height="14" viewBox="0 0 14 14"><path d="M8.600 1.200l2.600 1.700-5.200 8.200-3.100 1.300.4-3.300zM8.500 13h4.200" fill="none" stroke="#303133" stroke-width="1.100" stroke-linejoin="round"></path></svg>
  <div class="td abs" style="left:974px;top:638.7px;color:#303133">编辑</div>
  <svg class="abs" style="left:1020.5px;top:642.5px" width="14" height="14" viewBox="0 0 14 14"><path d="M1.500 3.300h11M5.200 3.200V1.600h3.600v1.600M2.900 3.300v9.200h8.200V3.300M5.700 5.800v4.200M8.300 5.800v4.200" fill="none" stroke="#303133" stroke-width="1.100"></path></svg>
  <div class="td abs" style="left:1041px;top:638.7px;color:#303133">删除</div>
  <div class="rb abs" style="left:31px;top:673.5px;width:1136px"></div>
  <div class="td abs" style="left:43px;top:687.2px">理赔</div>
  <div class="td abs" style="left:499px;top:687.2px">sysadmin</div>
  <div class="td abs" style="left:726px;top:687.2px">sysadmin</div>
  <svg class="abs" style="left:953.0px;top:691.0px" width="14" height="14" viewBox="0 0 14 14"><path d="M8.600 1.200l2.600 1.700-5.200 8.200-3.100 1.300.4-3.300zM8.500 13h4.200" fill="none" stroke="#303133" stroke-width="1.100" stroke-linejoin="round"></path></svg>
  <div class="td abs" style="left:974px;top:687.2px;color:#303133">编辑</div>
  <svg class="abs" style="left:1020.5px;top:691.0px" width="14" height="14" viewBox="0 0 14 14"><path d="M1.500 3.300h11M5.200 3.200V1.600h3.600v1.600M2.900 3.300v9.200h8.200V3.300M5.700 5.800v4.200M8.300 5.800v4.200" fill="none" stroke="#303133" stroke-width="1.100"></path></svg>
  <div class="td abs" style="left:1041px;top:687.2px;color:#303133">删除</div>
  <div class="rb abs" style="left:31px;top:721.7px;width:1136px"></div>
  <div class="rb abs" style="left:31px;top:903.5px;width:1136px"></div>
  <svg class="abs" style="left:1176.1px;top:947.1px" width="7" height="7" viewBox="0 0 7 7"><path d="M5.900 0v5.900H0" fill="none" stroke="#a6a6a6" stroke-width="1.800"></path></svg>
  <!--CARD2_E-->
  <!--CARD3_S-->
  <div class="card abs" style="left:1199px;top:-63px;width:1175px;height:560px"></div>
  <svg class="abs" style="left:1200px;top:-13px" width="1173" height="508" viewBox="1368 90 1173 508" font-family="Liberation Sans, sans-serif">
  <rect x="1499.3" y="315.90" width="909.4" height="71.20" fill="#f8f8f8"></rect>
  <rect x="1499.3" y="173.50" width="909.4" height="71.20" fill="#f8f8f8"></rect>
  <rect x="1499.3" y="386.50" width="909.4" height="71.20" fill="#fefefe"></rect>
  <rect x="1499.3" y="244.10" width="909.4" height="71.20" fill="#fefefe"></rect>
  <rect x="1499.3" y="101.70" width="909.4" height="71.20" fill="#fefefe"></rect>
  <path d="M1499.3 387.10H2408.7" stroke="#eeeeee" stroke-width="1"></path>
  <path d="M1499.3 315.90H2408.7" stroke="#eeeeee" stroke-width="1"></path>
  <path d="M1499.3 244.70H2408.7" stroke="#eeeeee" stroke-width="1"></path>
  <path d="M1499.3 173.50H2408.7" stroke="#eeeeee" stroke-width="1"></path>
  <path d="M1499.3 102.30H2408.7" stroke="#eeeeee" stroke-width="1"></path>
  <path d="M1499.30 100.70V458.40" stroke="#4a8fce" stroke-width="1.400"></path>
  <path d="M1498.60 457.70H2409.44" stroke="#4a8fce" stroke-width="1.400"></path>
  <path d="M1499.30 457.70v6M1564.26 457.70v6M1629.22 457.70v6M1694.18 457.70v6M1759.14 457.70v6M1824.10 457.70v6M1889.06 457.70v6M1954.02 457.70v6M2018.98 457.70v6M2083.94 457.70v6M2148.90 457.70v6M2213.86 457.70v6M2278.82 457.70v6M2343.78 457.70v6M2408.74 457.70v6" stroke="#4a8fce" stroke-width="1.200"></path>
  <text x="1489.6" y="461.35" font-size="15.500" fill="#4a8fce" text-anchor="end">0</text>
  <text x="1489.6" y="390.15" font-size="15.500" fill="#4a8fce" text-anchor="end">10</text>
  <text x="1489.6" y="318.95" font-size="15.500" fill="#4a8fce" text-anchor="end">20</text>
  <text x="1489.6" y="247.75" font-size="15.500" fill="#4a8fce" text-anchor="end">30</text>
  <text x="1489.6" y="176.55" font-size="15.500" fill="#4a8fce" text-anchor="end">40</text>
  <text x="1489.6" y="105.35" font-size="15.500" fill="#4a8fce" text-anchor="end">50</text>
  <text x="1499.30" y="467.00" font-size="15.900" fill="#4a8fce" transform="rotate(24 1499.30 467.00)" dominant-baseline="middle">2023-12-14</text>
  <text x="1564.26" y="467.00" font-size="15.900" fill="#4a8fce" transform="rotate(24 1564.26 467.00)" dominant-baseline="middle">2023-12-15</text>
  <text x="1629.22" y="467.00" font-size="15.900" fill="#4a8fce" transform="rotate(24 1629.22 467.00)" dominant-baseline="middle">2023-12-16</text>
  <text x="1694.18" y="467.00" font-size="15.900" fill="#4a8fce" transform="rotate(24 1694.18 467.00)" dominant-baseline="middle">2023-12-17</text>
  <text x="1759.14" y="467.00" font-size="15.900" fill="#4a8fce" transform="rotate(24 1759.14 467.00)" dominant-baseline="middle">2023-12-18</text>
  <text x="1824.10" y="467.00" font-size="15.900" fill="#4a8fce" transform="rotate(24 1824.10 467.00)" dominant-baseline="middle">2023-12-19</text>
  <text x="1889.06" y="467.00" font-size="15.900" fill="#4a8fce" transform="rotate(24 1889.06 467.00)" dominant-baseline="middle">2023-12-20</text>
  <text x="1954.02" y="467.00" font-size="15.900" fill="#4a8fce" transform="rotate(24 1954.02 467.00)" dominant-baseline="middle">2023-12-21</text>
  <text x="2018.98" y="467.00" font-size="15.900" fill="#4a8fce" transform="rotate(24 2018.98 467.00)" dominant-baseline="middle">2023-12-22</text>
  <text x="2083.94" y="467.00" font-size="15.900" fill="#4a8fce" transform="rotate(24 2083.94 467.00)" dominant-baseline="middle">2023-12-23</text>
  <text x="2148.90" y="467.00" font-size="15.900" fill="#4a8fce" transform="rotate(24 2148.90 467.00)" dominant-baseline="middle">2023-12-24</text>
  <text x="2213.86" y="467.00" font-size="15.900" fill="#4a8fce" transform="rotate(24 2213.86 467.00)" dominant-baseline="middle">2023-12-25</text>
  <text x="2278.82" y="467.00" font-size="15.900" fill="#4a8fce" transform="rotate(24 2278.82 467.00)" dominant-baseline="middle">2023-12-26</text>
  <text x="2343.78" y="467.00" font-size="15.900" fill="#4a8fce" transform="rotate(24 2343.78 467.00)" dominant-baseline="middle">2023-12-27</text>
  <text x="2408.74" y="467.00" font-size="15.900" fill="#4a8fce" transform="rotate(24 2408.74 467.00)" dominant-baseline="middle">2023-12-28</text>
  <path d="M1499.30 108.82 L1564.26 133.74 L1629.22 158.66 L1694.18 183.58 L1759.14 208.50 L1824.10 233.42 L1889.06 258.34 L1954.02 283.26 L2018.98 308.18 L2083.94 333.10 L2148.90 358.02 L2213.86 382.94 L2278.82 407.86 L2343.78 432.78 L2408.74 457.70" fill="none" stroke="#b8a5de" stroke-width="2.500" stroke-linejoin="round"></path>
  <path d="M1499.30 365.14 C1499.30 365.14 1531.78 365.14 1564.26 365.14 C1596.74 365.14 1596.74 365.14 1629.22 365.14 C1661.70 365.14 1661.70 365.14 1694.18 365.14 C1726.66 365.14 1726.66 365.14 1759.14 365.14 C1791.62 365.14 1792.00 365.14 1824.10 365.14 C1856.96 361.54 1856.20 354.50 1889.06 350.90 C1921.16 347.38 1921.54 350.90 1954.02 350.90 C1986.50 350.90 1986.50 350.90 2018.98 350.90 C2051.46 350.90 2062.42 365.14 2083.94 350.90 C2127.38 312.81 2116.42 236.98 2148.90 236.98 C2181.38 236.98 2170.42 312.81 2213.86 350.90 C2235.38 365.14 2246.34 350.90 2278.82 350.90 C2311.30 350.90 2322.26 365.14 2343.78 350.90 C2387.22 312.81 2408.74 236.98 2408.74 236.98" fill="none" stroke="#5abfc3" stroke-width="2.500" stroke-linejoin="round"></path>
  <g fill="#fff" stroke="#b8a5de" stroke-width="1.100"><circle cx="1499.30" cy="108.82" r="1.450"></circle><circle cx="1564.26" cy="133.74" r="1.450"></circle><circle cx="1629.22" cy="158.66" r="1.450"></circle><circle cx="1694.18" cy="183.58" r="1.450"></circle><circle cx="1759.14" cy="208.50" r="1.450"></circle><circle cx="1824.10" cy="233.42" r="1.450"></circle><circle cx="1889.06" cy="258.34" r="1.450"></circle><circle cx="1954.02" cy="283.26" r="1.450"></circle><circle cx="2018.98" cy="308.18" r="1.450"></circle><circle cx="2083.94" cy="333.10" r="1.450"></circle><circle cx="2148.90" cy="358.02" r="1.450"></circle><circle cx="2213.86" cy="382.94" r="1.450"></circle><circle cx="2278.82" cy="407.86" r="1.450"></circle><circle cx="2343.78" cy="432.78" r="1.450"></circle><circle cx="2408.74" cy="457.70" r="1.450"></circle></g>
  <g fill="#fff" stroke="#5abfc3" stroke-width="1.100"><circle cx="1499.30" cy="365.14" r="1.450"></circle><circle cx="1564.26" cy="365.14" r="1.450"></circle><circle cx="1629.22" cy="365.14" r="1.450"></circle><circle cx="1694.18" cy="365.14" r="1.450"></circle><circle cx="1759.14" cy="365.14" r="1.450"></circle><circle cx="1824.10" cy="365.14" r="1.450"></circle><circle cx="1889.06" cy="350.90" r="1.450"></circle><circle cx="1954.02" cy="350.90" r="1.450"></circle><circle cx="2018.98" cy="350.90" r="1.450"></circle><circle cx="2083.94" cy="350.90" r="1.450"></circle><circle cx="2148.90" cy="236.98" r="1.450"></circle><circle cx="2213.86" cy="350.90" r="1.450"></circle><circle cx="2278.82" cy="350.90" r="1.450"></circle><circle cx="2343.78" cy="350.90" r="1.450"></circle><circle cx="2408.74" cy="236.98" r="1.450"></circle></g>
  </svg>
  <div class="abs" style="left:2258.0px;top:342.8px;font-size:14px;line-height:20px;color:#4a8fce;white-space:nowrap">日期</div>
  <svg class="abs" style="left:2363.1px;top:486.1px" width="7" height="7" viewBox="0 0 7 7"><path d="M5.900 0v5.900H0" fill="none" stroke="#a6a6a6" stroke-width="1.800"></path></svg>
  <!--CARD3_E-->
  <!--CARD4_S-->
  <div class="card abs" style="left:1199px;top:508.6px;width:1175px;height:564.7px"></div>
  <div class="ctitle abs" style="left:1212px;top:524.5px">迭代</div>
  <div class="hline abs" style="left:1201px;top:568.7px;width:1171px"></div>
  <svg class="abs" style="left:2240.0px;top:529.6px" width="20" height="20" viewBox="0 0 20 20"><g fill="none" stroke="#2b3548" stroke-width="1.250"><path d="M16.700 9.600A6.800 6.800 0 0 0 4.600 5.600"></path><path d="M3.300 10.400A6.800 6.800 0 0 0 15.400 14.400"></path><path d="M4.300 2.900l.1 3.200 3.200-.3"></path><path d="M15.700 17.100l-.1-3.200-3.200.3"></path></g></svg>
  <svg class="abs" style="left:2273.3px;top:529.6px" width="20" height="20" viewBox="0 0 20 20"><path d="M1.800 7.200V1.800h5.400M12.800 1.800h5.400v5.400M18.200 12.800v5.400h-5.400M7.200 18.200H1.800v-5.400" fill="none" stroke="#1b2438" stroke-width="2.800"></path></svg>
  <svg class="abs" style="left:2306.6px;top:529.6px" width="20" height="20" viewBox="0 0 20 20"><path d="M11.57 1.95 L14.58 3.20 L14.25 5.08 L14.92 5.75 L16.80 5.42 L18.05 8.43 L16.48 9.53 L16.48 10.47 L18.05 11.57 L16.80 14.58 L14.92 14.25 L14.25 14.92 L14.58 16.80 L11.57 18.05 L10.47 16.48 L9.53 16.48 L8.43 18.05 L5.42 16.80 L5.75 14.92 L5.08 14.25 L3.20 14.58 L1.95 11.57 L3.52 10.47 L3.52 9.53 L1.95 8.43 L3.20 5.42 L5.08 5.75 L5.75 5.08 L5.42 3.20 L8.43 1.95 L9.53 3.52 L10.47 3.52z" fill="none" stroke="#2b3548" stroke-width="1.200" stroke-linejoin="round"></path><circle cx="10" cy="10" r="3.800" fill="none" stroke="#2b3548" stroke-width="1.200"></circle></svg>
  <svg class="abs" style="left:2339.8px;top:529.6px" width="20" height="20" viewBox="0 0 20 20"><g fill="none" stroke="#f17f7f" stroke-width="1.150"><path d="M1.300 4.700h17.400"></path><path d="M7.300 4.600V2.200h5.400v2.400"></path><path d="M3.300 4.700v13.100h13.400V4.700"></path><path d="M8.200 8.300v6.200M11.800 8.300v6.200"></path></g></svg>
  <div class="th abs" style="left:1218px;top:588px;width:1136px;height:55.9px;border-bottom:1px solid #ebeef5"></div>
  <div class="abs" style="left:1427.4px;top:588px;width:1px;height:55.4px;background:#edf0f7"></div>
  <div class="abs" style="left:1636.5px;top:588px;width:1px;height:55.4px;background:#edf0f7"></div>
  <div class="abs" style="left:1845.5px;top:588px;width:1px;height:55.4px;background:#edf0f7"></div>
  <div class="abs" style="left:2054.2px;top:588px;width:1px;height:55.4px;background:#edf0f7"></div>
  <div class="tht abs" style="left:1230.0px;top:604.2px">迭代名</div>
  <svg class="abs" style="left:1283.0px;top:607.3px" width="10" height="14" viewBox="0 0 10 14"><path d="M5 .5l5 5.500H0z" fill="#c0c4cc"></path><path d="M5 13.500l5-5.500H0z" fill="#c0c4cc"></path></svg>
  <div class="tht abs" style="left:1439.5px;top:604.2px">迭代负责人</div>
  <div class="tht abs" style="left:1648.5px;top:604.2px">开始时间</div>
  <svg class="abs" style="left:1715.5px;top:607.3px" width="10" height="14" viewBox="0 0 10 14"><path d="M5 .5l5 5.500H0z" fill="#c0c4cc"></path><path d="M5 13.500l5-5.500H0z" fill="#c0c4cc"></path></svg>
  <div class="tht abs" style="left:1857.5px;top:604.2px">结束时间</div>
  <svg class="abs" style="left:1924.7px;top:607.3px" width="10" height="14" viewBox="0 0 10 14"><path d="M5 .5l5 5.500H0z" fill="#c0c4cc"></path><path d="M5 13.500l5-5.500H0z" fill="#c0c4cc"></path></svg>
  <div class="tht abs" style="left:2066.2px;top:604.2px">当前阶段</div>
  <svg class="abs" style="left:2133.0px;top:607.3px" width="10" height="14" viewBox="0 0 10 14"><path d="M5 .5l5 5.500H0z" fill="#c0c4cc"></path><path d="M5 13.500l5-5.500H0z" fill="#c0c4cc"></path></svg>
  <div class="td abs" style="left:1230px;top:653.6px">123</div>
  <svg class="abs" style="left:1439.8px;top:657.1px" width="17" height="17" viewBox="0 0 17 17"><defs><radialGradient id="ga0" cx=".68" cy=".25" r=".9"><stop offset="0" stop-color="#8fdcda"></stop><stop offset=".45" stop-color="#46b1c0"></stop><stop offset="1" stop-color="#2f8fa6"></stop></radialGradient><clipPath id="ca0"><circle cx="8.500" cy="8.500" r="8.500"></circle></clipPath></defs><g clip-path="url(#ca0)"><rect width="17" height="17" fill="url(#ga0)"></rect><path d="M9.500 6.800l5-3.400" stroke="#2a5d75" stroke-width="1.300"></path><path d="M4 3.800l3.500 1.600" stroke="#3a88a0" stroke-width="1"></path><g fill="#e8e2cf"><circle cx="2.600" cy="8" r=".8"></circle><circle cx="3.800" cy="10.600" r=".9"></circle><circle cx="5.800" cy="9" r=".6"></circle><circle cx="2.500" cy="12" r=".7"></circle><circle cx="6.500" cy="14.800" r=".7"></circle></g><circle cx="8.300" cy="12.300" r=".6" fill="#d98a55"></circle><circle cx="11.800" cy="10" r=".5" fill="#d9a877"></circle></g></svg>
  <div class="td abs" style="left:1460.6px;top:653.6px">sysadmin</div>
  <div class="td abs" style="left:1648.5px;top:653.6px">2023-12-06</div>
  <div class="td abs" style="left:1857.5px;top:653.6px">2023-12-28</div>
  <div class="tag abs" style="left:2066.2px;top:652.9px">未开始</div>
  <div class="rb abs" style="left:1218px;top:685.8px;width:1136px"></div>
  <div class="td abs" style="left:1230px;top:696.6px">111</div>
  <svg class="abs" style="left:1439.8px;top:700.1px" width="17.0" height="17.0" viewBox="-0.100 1.300 31.400 31.400"><defs><clipPath id="cb1"><circle cx="15.600" cy="17" r="15.700"></circle></clipPath></defs><g clip-path="url(#cb1)"><circle cx="15.600" cy="17" r="15.700" fill="#f6f6f4"></circle><path d="M3.300 34C3.800 27.600 8 25.700 12.200 24.800L15.600 27 19 24.800C23.200 25.700 27.400 27.600 27.900 34Z" fill="#fff" stroke="#3a3a3a" stroke-width="1.53"></path><path d="M13.900 25.200h3.400l.6 8.200h-4.600z" fill="#4d6784"></path><path d="M13.300 20.500h4.600v4.600l-2.300 1.500-2.300-1.500z" fill="#f3d09c" stroke="#3a3a3a" stroke-width="1.19"></path><circle cx="6.400" cy="12.800" r="1.400" fill="#fbdcaa" stroke="#3a3a3a" stroke-width="1.36"></circle><circle cx="24.800" cy="12.800" r="1.400" fill="#fbdcaa" stroke="#3a3a3a" stroke-width="1.36"></circle><ellipse cx="15.600" cy="11.600" rx="9" ry="10.800" fill="#fbdcaa" stroke="#3a3a3a" stroke-width="1.70"></ellipse><path d="M6.600 11.600C6 4.600 10 .8 15.600 .8C21.200 .8 25.200 4.600 24.600 11.600C23.500 9.400 21 8.200 18 8.500C17 9.600 14.400 9.600 13.200 8.500C10.400 8.200 7.800 9.400 6.600 11.600Z" fill="#8c7b6e" stroke="#3a3a3a" stroke-width="1.53"></path></g></svg>
  <div class="td abs" style="left:1460.6px;top:696.6px">张子康</div>
  <div class="td abs" style="left:1648.5px;top:696.6px">2023-12-01</div>
  <div class="td abs" style="left:1857.5px;top:696.6px">2023-12-05</div>
  <div class="tag abs" style="left:2066.2px;top:695.9px">未开始</div>
  <div class="rb abs" style="left:1218px;top:728.8px;width:1136px"></div>
  <div class="td abs" style="left:1230px;top:739.6px">1234</div>
  <svg class="abs" style="left:1439.8px;top:743.1px" width="17.0" height="17.0" viewBox="-0.100 1.300 31.400 31.400"><defs><clipPath id="cb2"><circle cx="15.600" cy="17" r="15.700"></circle></clipPath></defs><g clip-path="url(#cb2)"><circle cx="15.600" cy="17" r="15.700" fill="#f6f6f4"></circle><path d="M3.300 34C3.800 27.600 8 25.700 12.200 24.800L15.600 27 19 24.800C23.200 25.700 27.400 27.600 27.900 34Z" fill="#fff" stroke="#3a3a3a" stroke-width="1.53"></path><path d="M13.900 25.200h3.400l.6 8.200h-4.600z" fill="#4d6784"></path><path d="M13.300 20.500h4.600v4.600l-2.300 1.500-2.300-1.500z" fill="#f3d09c" stroke="#3a3a3a" stroke-width="1.19"></path><circle cx="6.400" cy="12.800" r="1.400" fill="#fbdcaa" stroke="#3a3a3a" stroke-width="1.36"></circle><circle cx="24.800" cy="12.800" r="1.400" fill="#fbdcaa" stroke="#3a3a3a" stroke-width="1.36"></circle><ellipse cx="15.600" cy="11.600" rx="9" ry="10.800" fill="#fbdcaa" stroke="#3a3a3a" stroke-width="1.70"></ellipse><path d="M6.600 11.600C6 4.600 10 .8 15.600 .8C21.200 .8 25.200 4.600 24.600 11.600C23.500 9.400 21 8.200 18 8.500C17 9.600 14.400 9.600 13.200 8.500C10.400 8.200 7.800 9.400 6.600 11.600Z" fill="#8c7b6e" stroke="#3a3a3a" stroke-width="1.53"></path></g></svg>
  <div class="td abs" style="left:1460.6px;top:739.6px">张子康</div>
  <div class="td abs" style="left:1648.5px;top:739.6px">2023-12-01</div>
  <div class="td abs" style="left:1857.5px;top:739.6px">2023-12-29</div>
  <div class="tag abs" style="left:2066.2px;top:738.9px">未开始</div>
  <div class="rb abs" style="left:1218px;top:771.8px;width:1136px"></div>
  <div class="td abs" style="left:1230px;top:782.6px">12345</div>
  <svg class="abs" style="left:1439.8px;top:786.1px" width="17" height="17" viewBox="0 0 17 17"><defs><radialGradient id="ga3" cx=".68" cy=".25" r=".9"><stop offset="0" stop-color="#8fdcda"></stop><stop offset=".45" stop-color="#46b1c0"></stop><stop offset="1" stop-color="#2f8fa6"></stop></radialGradient><clipPath id="ca3"><circle cx="8.500" cy="8.500" r="8.500"></circle></clipPath></defs><g clip-path="url(#ca3)"><rect width="17" height="17" fill="url(#ga3)"></rect><path d="M9.500 6.800l5-3.400" stroke="#2a5d75" stroke-width="1.300"></path><path d="M4 3.800l3.500 1.600" stroke="#3a88a0" stroke-width="1"></path><g fill="#e8e2cf"><circle cx="2.600" cy="8" r=".8"></circle><circle cx="3.800" cy="10.600" r=".9"></circle><circle cx="5.800" cy="9" r=".6"></circle><circle cx="2.500" cy="12" r=".7"></circle><circle cx="6.500" cy="14.800" r=".7"></circle></g><circle cx="8.300" cy="12.300" r=".6" fill="#d98a55"></circle><circle cx="11.800" cy="10" r=".5" fill="#d9a877"></circle></g></svg>
  <div class="td abs" style="left:1460.6px;top:782.6px">sysadmin</div>
  <div class="td abs" style="left:1648.5px;top:782.6px">2023-12-01</div>
  <div class="td abs" style="left:1857.5px;top:782.6px">2023-12-30</div>
  <div class="tag abs" style="left:2066.2px;top:781.9px">未开始</div>
  <div class="rb abs" style="left:1218px;top:814.8px;width:1136px"></div>
  <div class="td abs" style="left:1230px;top:825.6px">qq</div>
  <svg class="abs" style="left:1439.8px;top:829.1px" width="17.0" height="17.0" viewBox="-0.100 1.300 31.400 31.400"><defs><clipPath id="cb4"><circle cx="15.600" cy="17" r="15.700"></circle></clipPath></defs><g clip-path="url(#cb4)"><circle cx="15.600" cy="17" r="15.700" fill="#f6f6f4"></circle><path d="M3.300 34C3.800 27.600 8 25.700 12.200 24.800L15.600 27 19 24.800C23.200 25.700 27.400 27.600 27.900 34Z" fill="#fff" stroke="#3a3a3a" stroke-width="1.53"></path><path d="M13.900 25.200h3.400l.6 8.200h-4.600z" fill="#4d6784"></path><path d="M13.300 20.500h4.600v4.600l-2.300 1.500-2.300-1.500z" fill="#f3d09c" stroke="#3a3a3a" stroke-width="1.19"></path><circle cx="6.400" cy="12.800" r="1.400" fill="#fbdcaa" stroke="#3a3a3a" stroke-width="1.36"></circle><circle cx="24.800" cy="12.800" r="1.400" fill="#fbdcaa" stroke="#3a3a3a" stroke-width="1.36"></circle><ellipse cx="15.600" cy="11.600" rx="9" ry="10.800" fill="#fbdcaa" stroke="#3a3a3a" stroke-width="1.70"></ellipse><path d="M6.600 11.600C6 4.600 10 .8 15.600 .8C21.200 .8 25.200 4.600 24.600 11.600C23.500 9.400 21 8.200 18 8.500C17 9.600 14.400 9.600 13.200 8.500C10.400 8.200 7.800 9.400 6.600 11.600Z" fill="#8c7b6e" stroke="#3a3a3a" stroke-width="1.53"></path></g></svg>
  <div class="td abs" style="left:1460.6px;top:825.6px">张子康</div>
  <div class="td abs" style="left:1648.5px;top:825.6px">2023-11-28</div>
  <div class="td abs" style="left:1857.5px;top:825.6px">2023-12-07</div>
  <div class="tag abs" style="left:2066.2px;top:824.9px">未开始</div>
  <div class="rb abs" style="left:1218px;top:857.8px;width:1136px"></div>
  <div class="td abs" style="left:1230px;top:868.6px">沪惠保理赔模块</div>
  <svg class="abs" style="left:1439.8px;top:872.1px" width="17" height="17" viewBox="0 0 17 17"><defs><radialGradient id="ga5" cx=".68" cy=".25" r=".9"><stop offset="0" stop-color="#8fdcda"></stop><stop offset=".45" stop-color="#46b1c0"></stop><stop offset="1" stop-color="#2f8fa6"></stop></radialGradient><clipPath id="ca5"><circle cx="8.500" cy="8.500" r="8.500"></circle></clipPath></defs><g clip-path="url(#ca5)"><rect width="17" height="17" fill="url(#ga5)"></rect><path d="M9.500 6.800l5-3.400" stroke="#2a5d75" stroke-width="1.300"></path><path d="M4 3.800l3.500 1.600" stroke="#3a88a0" stroke-width="1"></path><g fill="#e8e2cf"><circle cx="2.600" cy="8" r=".8"></circle><circle cx="3.800" cy="10.600" r=".9"></circle><circle cx="5.800" cy="9" r=".6"></circle><circle cx="2.500" cy="12" r=".7"></circle><circle cx="6.500" cy="14.800" r=".7"></circle></g><circle cx="8.300" cy="12.300" r=".6" fill="#d98a55"></circle><circle cx="11.800" cy="10" r=".5" fill="#d9a877"></circle></g></svg>
  <div class="td abs" style="left:1460.6px;top:868.6px">sysadmin</div>
  <div class="td abs" style="left:1648.5px;top:868.6px">2023-11-22</div>
  <div class="td abs" style="left:1857.5px;top:868.6px">2023-12-06</div>
  <div class="tag abs" style="left:2066.2px;top:867.9px">未开始</div>
  <div class="rtag abs" style="left:2147.6px;top:867.9px">开始时间落后计划28天</div>
  <div class="rb abs" style="left:1218px;top:900.8px;width:1136px"></div>
  <div class="td abs" style="left:1230px;top:911.6px">沪惠保投保模块</div>
  <svg class="abs" style="left:1439.8px;top:915.1px" width="17" height="17" viewBox="0 0 17 17"><defs><radialGradient id="ga6" cx=".68" cy=".25" r=".9"><stop offset="0" stop-color="#8fdcda"></stop><stop offset=".45" stop-color="#46b1c0"></stop><stop offset="1" stop-color="#2f8fa6"></stop></radialGradient><clipPath id="ca6"><circle cx="8.500" cy="8.500" r="8.500"></circle></clipPath></defs><g clip-path="url(#ca6)"><rect width="17" height="17" fill="url(#ga6)"></rect><path d="M9.500 6.800l5-3.400" stroke="#2a5d75" stroke-width="1.300"></path><path d="M4 3.800l3.500 1.600" stroke="#3a88a0" stroke-width="1"></path><g fill="#e8e2cf"><circle cx="2.600" cy="8" r=".8"></circle><circle cx="3.800" cy="10.600" r=".9"></circle><circle cx="5.800" cy="9" r=".6"></circle><circle cx="2.500" cy="12" r=".7"></circle><circle cx="6.500" cy="14.800" r=".7"></circle></g><circle cx="8.300" cy="12.300" r=".6" fill="#d98a55"></circle><circle cx="11.800" cy="10" r=".5" fill="#d9a877"></circle></g></svg>
  <div class="td abs" style="left:1460.6px;top:911.6px">sysadmin</div>
  <div class="td abs" style="left:1648.5px;top:911.6px">2023-11-07</div>
  <div class="td abs" style="left:1857.5px;top:911.6px">2023-11-21</div>
  <div class="tag abs" style="left:2066.2px;top:910.9px">未开始</div>
  <div class="rtag abs" style="left:2147.6px;top:910.9px">完成时间落后计划1天</div>
  <div class="rb abs" style="left:1218px;top:943.8px;width:1136px"></div>
  <div class="td abs" style="left:1230px;top:954.6px">沪惠保基础信息模块</div>
  <svg class="abs" style="left:1439.8px;top:958.1px" width="17" height="17" viewBox="0 0 17 17"><defs><radialGradient id="ga7" cx=".68" cy=".25" r=".9"><stop offset="0" stop-color="#8fdcda"></stop><stop offset=".45" stop-color="#46b1c0"></stop><stop offset="1" stop-color="#2f8fa6"></stop></radialGradient><clipPath id="ca7"><circle cx="8.500" cy="8.500" r="8.500"></circle></clipPath></defs><g clip-path="url(#ca7)"><rect width="17" height="17" fill="url(#ga7)"></rect><path d="M9.500 6.800l5-3.400" stroke="#2a5d75" stroke-width="1.300"></path><path d="M4 3.800l3.500 1.600" stroke="#3a88a0" stroke-width="1"></path><g fill="#e8e2cf"><circle cx="2.600" cy="8" r=".8"></circle><circle cx="3.800" cy="10.600" r=".9"></circle><circle cx="5.800" cy="9" r=".6"></circle><circle cx="2.500" cy="12" r=".7"></circle><circle cx="6.500" cy="14.800" r=".7"></circle></g><circle cx="8.300" cy="12.300" r=".6" fill="#d98a55"></circle><circle cx="11.800" cy="10" r=".5" fill="#d9a877"></circle></g></svg>
  <div class="td abs" style="left:1460.6px;top:954.6px">sysadmin</div>
  <div class="td abs" style="left:1648.5px;top:954.6px">2023-10-23</div>
  <div class="td abs" style="left:1857.5px;top:954.6px">2023-11-06</div>
  <div class="tag abs" style="left:2066.2px;top:953.9px">完成</div>
  <div class="rb abs" style="left:1218px;top:986.8px;width:1136px"></div>
  <div class="rb abs" style="left:1218px;top:1018.9px;width:1136px"></div>
  <svg class="abs" style="left:2363.1px;top:1062.2px" width="7" height="7" viewBox="0 0 7 7"><path d="M5.900 0v5.900H0" fill="none" stroke="#a6a6a6" stroke-width="1.800"></path></svg>
  <!--CARD4_E-->
  <!--CARD5_S-->
  <div class="card abs" style="left:12px;top:1084.5px;width:2362px;height:300px"></div>
  <svg class="abs" style="left:1139.8px;top:1128.9px" width="106" height="106" viewBox="0 0 106 106"><path d="M53 8.200v89.600M8.200 53h89.600" stroke="#dcdde3" stroke-width="8" stroke-linecap="round" fill="none"></path></svg>
  <!--CARD5_E-->
</div>
<!--OV_S-->
  <div class="abs" style="left:2554.400px;top:600px;width:8px;height:655.500px;background:#e3e3e3;border-radius:4px"></div>
<div class="abs" style="left:1365.500px;top:594.500px;width:1192.0px;height:598.9px;border:5px solid #ff1c0e;border-radius:5px"></div>
  <!--OV_E-->

</body></html>
